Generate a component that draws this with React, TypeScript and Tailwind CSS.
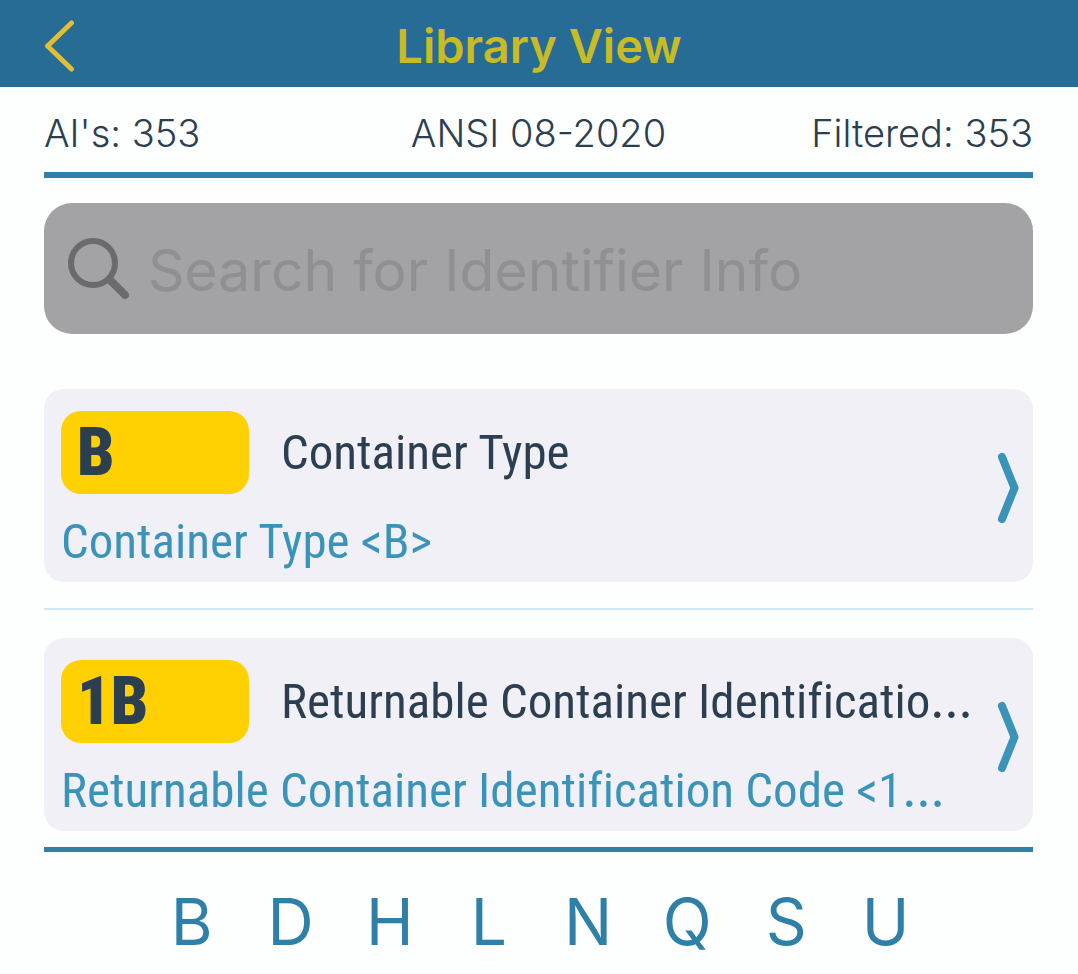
import React, { useState } from 'react';

interface Identifier {
  id: string;
  name: string;
  detail: string;
  truncated?: boolean;
}

const identifiers: Identifier[] = [
  { id: 'B', name: 'Container Type', detail: 'Container Type <B>' },
  {
    id: '1B',
    name: 'Returnable Container Identificatio',
    detail: 'Returnable Container Identification Code <1',
    truncated: true,
  },
];

const letters = ['B', 'D', 'H', 'L', 'N', 'Q', 'S', 'U'];

// the condensed face has a very tight ellipsis, so take it from Inter
function Ellipsis() {
  return <span className="font-['Inter',sans-serif] leading-none">…</span>;
}

function IdentifierCard({ item }: { item: Identifier }) {
  return (
    <a
      href={`#${item.id}`}
      className="flex items-center rounded-[20px] bg-[#f1f0f6] pl-[17px] pr-[14px] pt-[22px]"
    >
      <div className="flex-1 min-w-0 font-['Roboto_Condensed',sans-serif] font-normal [font-variant-ligatures:none]">
        <div className="flex items-center gap-8">
          <span className="w-[188px] h-[83px] shrink-0 rounded-[20px] bg-[#ffd102] pl-4 text-[66px] leading-[83px] font-black text-[#2b3f50]">
            {item.id}
          </span>
          <span className="whitespace-nowrap text-[49px] leading-[80px] text-[#2b3f50]">
            {item.name}
            {item.truncated && <Ellipsis />}
          </span>
        </div>
        <p className="whitespace-nowrap mt-2 text-[49px] leading-[80px] text-[#3a93b8]">
          {item.detail}
          {item.truncated && <Ellipsis />}
        </p>
      </div>
      <svg
        width="22"
        height="72"
        viewBox="0 0 22 72"
        fill="none"
        stroke="#3a93b8"
        strokeWidth="8"
        strokeLinecap="round"
        strokeLinejoin="round"
        className="shrink-0 mb-[18px]"
      >
        <path d="M5 5L17.500 36L5 67" />
      </svg>
    </a>
  );
}

export default function App() {
  const [search, setSearch] = useState<string>('');

  return (
    <div className="min-h-screen bg-[#fdfefe] font-['Inter',sans-serif]">
      <header className="grid grid-cols-[1fr_auto_1fr] items-center h-[87px] px-11 bg-[#276c95]">
        <button type="button" aria-label="Back" className="w-8 mt-1">
          <svg
            width="32"
            height="54"
            viewBox="0 0 32 54"
            fill="none"
            stroke="#e2be35"
            strokeWidth="5"
            strokeLinecap="round"
            strokeLinejoin="round"
          >
            <path d="M27.500 4L3.500 27L27.500 50" />
          </svg>
        </button>
        <h1 className="mt-1 text-[47px] leading-[60px] font-semibold text-[#c9bb23]">
          Library View
        </h1>
      </header>

      <main className="pl-11 pr-[45px]">
        <div className="grid grid-cols-[1fr_auto_1fr] items-center h-[91px] pt-2 border-b-[6px] border-[#2f80a8] text-[38px] font-light text-[#2b3f50]">
          <span>AI&apos;s: 353</span>
          <span>ANSI 08-2020</span>
          <span className="text-right">Filtered: 353</span>
        </div>

        <label className="flex items-center gap-4 mt-[25px] h-[131px] px-5 rounded-[28px] bg-[#a3a3a5]">
          <svg
            width="68"
            height="68"
            viewBox="0 0 68 68"
            fill="none"
            stroke="#6a6a6f"
            strokeLinecap="round"
            className="shrink-0"
          >
            <circle cx="29" cy="28" r="22" strokeWidth="6" />
            <path d="M45.500 44.500L61 60" strokeWidth="8" />
          </svg>
          <input
            type="text"
            aria-label="Search for Identifier Info"
            placeholder="Search for Identifier Info"
            value={search}
            onChange={(e) => setSearch(e.target.value)}
            className="flex-1 min-w-0 pt-1 bg-transparent outline-none text-[57px] text-[#55555a] placeholder:text-[#8f8f94]"
          />
        </label>

        <ul className="mt-[55px] pb-4 border-b-[5px] border-[#2f80a8]">
          {identifiers.map((item, index) => (
            <li
              key={item.id}
              className={index > 0 ? 'mt-[26px] pt-7 border-t-2 border-[#cde8f5]' : ''}
            >
              <IdentifierCard item={item} />
            </li>
          ))}
        </ul>

        <nav className="grid grid-cols-8 px-[98px] pt-[30px]">
          {letters.map((letter) => (
            <button
              key={letter}
              type="button"
              className="text-[64px] leading-[80px] text-[#2f80a8]"
            >
              {letter}
            </button>
          ))}
        </nav>
      </main>
    </div>
  );
}
